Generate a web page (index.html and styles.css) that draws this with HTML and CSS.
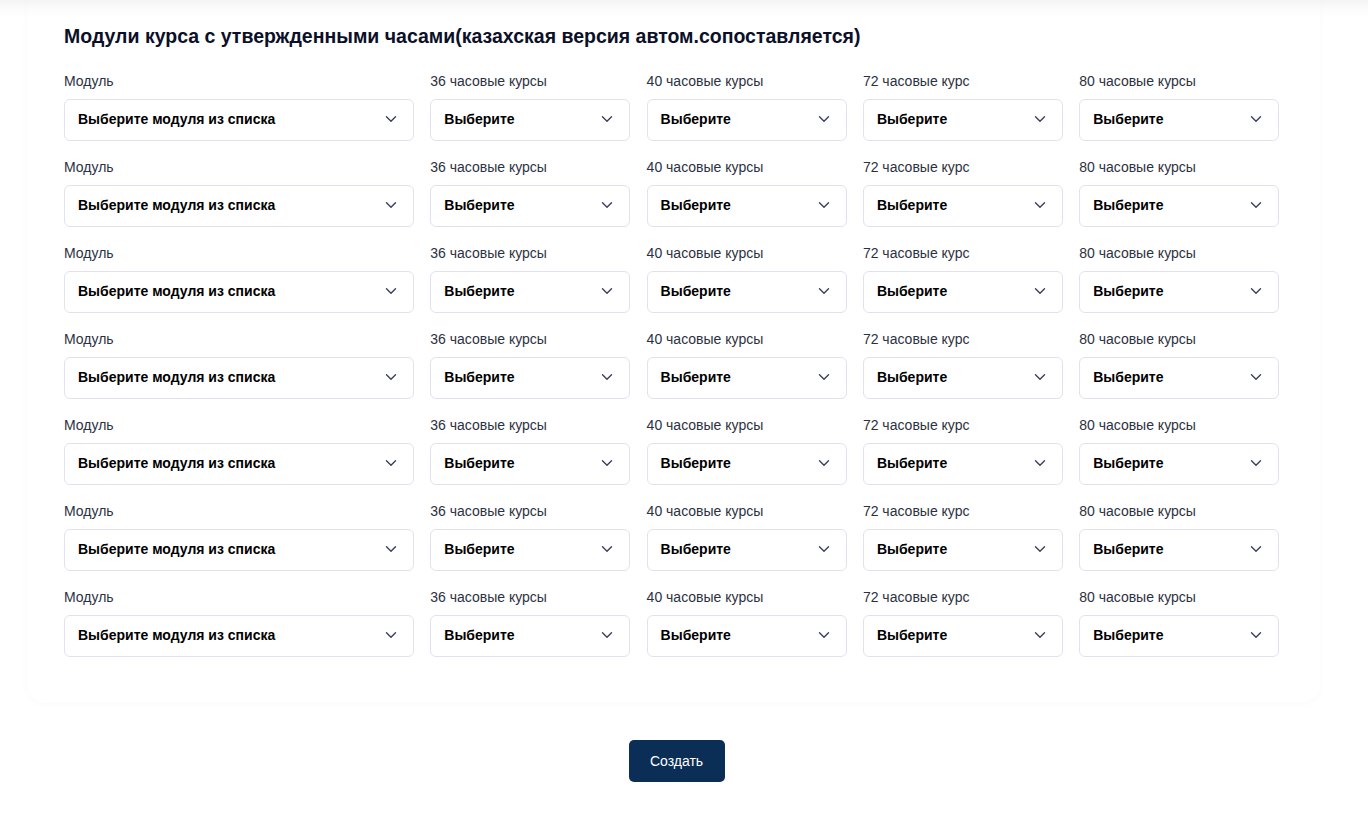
FILE: index.html
```html
<!DOCTYPE html>
<html lang="ru">
<head>
<meta charset="utf-8">
<title>Модули курса</title>
<link rel="stylesheet" href="styles.css">
</head>
<body>
<div class="page">
  <section class="card">
    <h2 class="title">Модули курса с утвержденными часами(казахская версия автом.сопоставляется)</h2>
    <div class="rows" id="rows"></div>
  </section>
  <div class="actions">
    <button class="btn">Создать</button>
  </div>
</div>
<template id="row">
  <div class="row">
    <div class="field"><label>Модуль</label><div class="select"><span>Выберите модуля из списка</span><svg viewBox="0 0 12 8" class="chev"><path d="M1.5 1.8 6 6.2 10.5 1.8"/></svg></div></div>
    <div class="field"><label>36 часовые курсы</label><div class="select"><span>Выберите</span><svg viewBox="0 0 12 8" class="chev"><path d="M1.5 1.8 6 6.2 10.5 1.8"/></svg></div></div>
    <div class="field"><label>40 часовые курсы</label><div class="select"><span>Выберите</span><svg viewBox="0 0 12 8" class="chev"><path d="M1.5 1.8 6 6.2 10.5 1.8"/></svg></div></div>
    <div class="field"><label>72 часовые курс</label><div class="select"><span>Выберите</span><svg viewBox="0 0 12 8" class="chev"><path d="M1.5 1.8 6 6.2 10.5 1.8"/></svg></div></div>
    <div class="field"><label>80 часовые курсы</label><div class="select"><span>Выберите</span><svg viewBox="0 0 12 8" class="chev"><path d="M1.5 1.8 6 6.2 10.5 1.8"/></svg></div></div>
  </div>
</template>
<script>
  var t = document.getElementById('row');
  var rows = document.getElementById('rows');
  for (var i = 0; i < 7; i++) rows.appendChild(t.content.cloneNode(true));
</script>
</body>
</html>
```
FILE: styles.css
```css
html, body {
  margin: 0;
  padding: 0;
  background: linear-gradient(#f4f4f5 0, #fbfbfb 8px, #ffffff 18px) no-repeat #fff;
  font-family: "Liberation Sans", Arial, sans-serif;
  color: #111;
}
.page {
  width: 1368px;
}
.card {
  margin-left: 27px;
  width: 1293px;
  box-sizing: border-box;
  padding: 24px 0 45px 37px;
  border-radius: 0 0 18px 18px;
  background: linear-gradient(#f4f4f5 0, #fbfbfb 8px, #ffffff 18px);
  box-shadow: 0 2px 8px rgba(0, 0, 0, 0.025);
}
.title {
  margin: 0 0 25px;
  font-size: 19.5px;
  line-height: 24px;
  font-weight: 700;
  color: #0b1028;
}
.rows {
  display: flex;
  flex-direction: column;
  gap: 18px;
}
.row {
  display: grid;
  grid-template-columns: 350px 200px 200px 200px 200px;
  column-gap: 16.3px;
}
.field label {
  display: block;
  font-size: 14px;
  line-height: 16px;
  color: #2c3142;
  margin-bottom: 10px;
}
.select {
  height: 42px;
  box-sizing: border-box;
  border: 1px solid #e2e2ee;
  border-radius: 6px;
  background: #fff;
  display: flex;
  align-items: center;
  justify-content: space-between;
  padding: 0 16px 2px 13px;
  font-size: 14px;
  font-weight: 700;
  color: #000;
}
.chev {
  width: 12px;
  height: 8px;
  fill: none;
  stroke: #3a3f5c;
  stroke-width: 1.4;
  stroke-linecap: round;
  stroke-linejoin: round;
}
.actions {
  width: 1368px;
  display: flex;
  justify-content: center;
  padding: 38px 0 0;
  box-sizing: border-box;
}
.btn {
  width: 96px;
  height: 42px;
  border: none;
  border-radius: 5px;
  background: #0b2e56;
  color: #fff;
  font-family: "Liberation Sans", Arial, sans-serif;
  font-size: 14px;
  margin-left: -15px;
}
```
